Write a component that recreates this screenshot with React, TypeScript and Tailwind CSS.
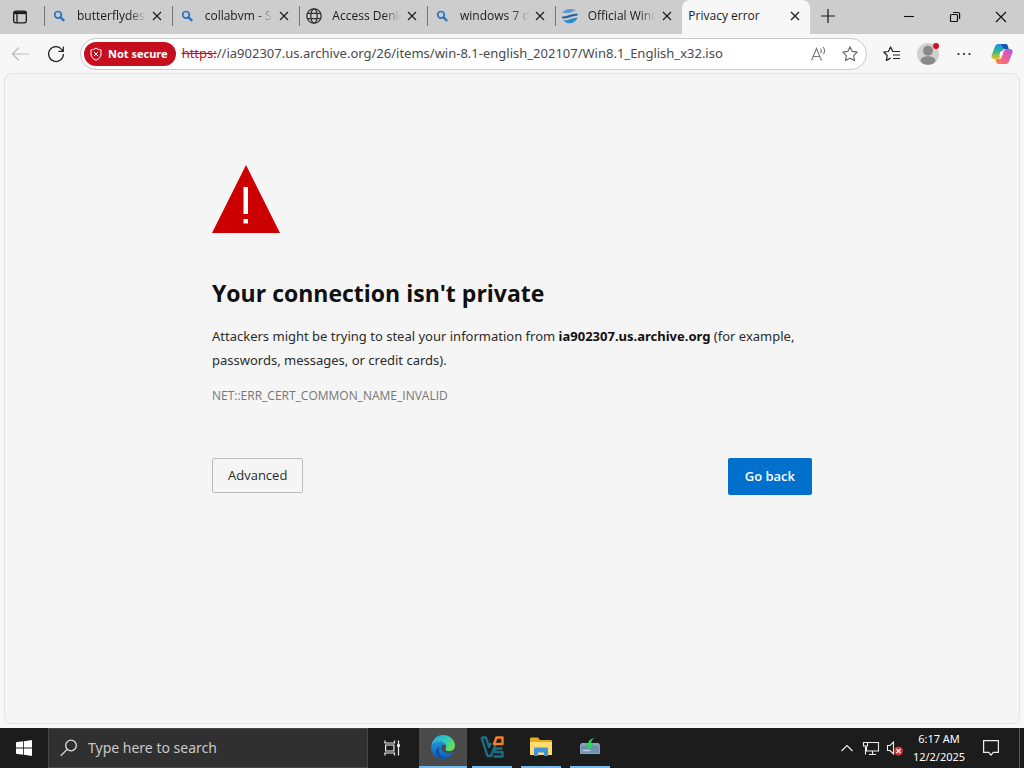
import React from "react";

const tabs = [
  { title: "butterflydesi", icon: "search" },
  { title: "collabvm - S", icon: "search" },
  { title: "Access Denie", icon: "globe" },
  { title: "windows 7 d", icon: "search" },
  { title: "Official Wind", icon: "swirl" },
];

function TabIcon({ type }: { type: string }) {
  if (type === "globe") {
    return (
      <svg viewBox="0 0 16 16" className="w-4 h-4" fill="none" stroke="#333" strokeWidth="1.3">
        <circle cx="8" cy="8" r="7.2" />
        <ellipse cx="8" cy="8" rx="3.2" ry="7.2" />
        <path d="M1.4 5.3h13.2M1.4 10.7h13.2" />
      </svg>
    );
  }
  if (type === "swirl") {
    return (
      <svg viewBox="0 0 16 16" className="w-4 h-4">
        <path d="M.5 4.800C2 1.500 8-.5 14 2.200C11.500 2.600 9.500 6 .5 4.800Z" fill="#5b9bd5" />
        <path d="M0 8.400c5 .8 8-2.700 15.500-2.600v2C10 7.600 7 11 .2 10.400Z" fill="#2a5f9e" />
        <path d="M1.500 12.200c5 .8 8-2.600 14-2.400C13.500 15.200 6 17.800 1.500 12.200Z" fill="#2f8bd0" />
      </svg>
    );
  }
  return (
    <svg viewBox="0 0 16 16" className="w-4 h-4" fill="none" stroke="#2d75bd" strokeLinecap="round">
      <circle cx="7" cy="6.8" r="3.3" strokeWidth="1.7" />
      <path d="M9.6 9.4l3 3" strokeWidth="2.2" />
    </svg>
  );
}

function CloseIcon() {
  return (
    <svg viewBox="0 0 10 10" className="w-[10px] h-[10px]" stroke="#222" strokeWidth="1.3">
      <path d="M1 1l8 8M9 1L1 9" />
    </svg>
  );
}

function TabBar() {
  return (
    <header className="flex h-[34px] shrink-0 bg-[#cdcdcd] font-['Open_Sans','Noto_Sans',sans-serif]">
      <button aria-label="Tab actions" className="flex w-11 shrink-0 items-center justify-center pr-1">
        <svg viewBox="0 0 16 16" className="w-4 h-4" fill="none" stroke="#1a1a1a" strokeWidth="1.3">
          <rect x="1.7" y="2.2" width="12.6" height="11.6" rx="2" />
          <path d="M2 3.800h12" strokeWidth="2.6" />
          <path d="M5 5v8.500" />
        </svg>
      </button>
      <div className="flex min-w-0 max-w-[766px] flex-1">
        {tabs.map((tab) => (
          <div key={tab.title} className="flex h-8 min-w-0 flex-1 items-center">
            <span className="h-5 w-px shrink-0 bg-[#777]" />
            <button className="flex min-w-0 flex-1 items-center pl-1.5">
              <span className="shrink-0">
                <TabIcon type={tab.icon} />
              </span>
              <span className="ml-2.5 flex-1 overflow-hidden whitespace-nowrap text-left text-xs text-[#1a1a1a] [mask-image:linear-gradient(to_right,black_75%,transparent)]">
                {tab.title}
              </span>
            </button>
            <button aria-label={`Close ${tab.title}`} className="ml-1.5 mr-2.5 shrink-0">
              <CloseIcon />
            </button>
          </div>
        ))}
        <div className="flex min-w-0 flex-1 items-center rounded-t-lg bg-[#f7f7f7] pb-0.5">
          <button className="flex-1 overflow-hidden whitespace-nowrap pl-1.5 text-left text-xs text-[#1a1a1a]">
            Privacy error
          </button>
          <button aria-label="Close Privacy error" className="mr-2.5 shrink-0">
            <CloseIcon />
          </button>
        </div>
      </div>
      <button aria-label="New tab" className="flex h-8 w-9 shrink-0 items-center justify-center">
        <svg viewBox="0 0 14 14" className="w-3.5 h-3.5" stroke="#1a1a1a" strokeWidth="1.2">
          <path d="M7 0v14M0 7h14" />
        </svg>
      </button>
      <div className="ml-auto flex">
        <button aria-label="Minimize" className="flex w-[46px] items-center justify-center">
          <svg viewBox="0 0 12 12" className="w-3 h-3" stroke="#111" strokeWidth="1.1">
            <path d="M1 5.500h10" />
          </svg>
        </button>
        <button aria-label="Restore" className="flex w-[46px] items-center justify-center">
          <svg viewBox="0 0 12 12" className="w-3 h-3" fill="none" stroke="#111" strokeWidth="1.2">
            <rect x="1.5" y="3.5" width="7" height="7" rx="1" />
            <path d="M4 1.500h5a1.600 1.600 0 0 1 1.600 1.600v5" />
          </svg>
        </button>
        <button aria-label="Close window" className="flex w-[46px] items-center justify-center">
          <svg viewBox="0 0 12 12" className="w-3 h-3" stroke="#111" strokeWidth="1.2">
            <path d="M1 1l10 10M11 1L1 11" />
          </svg>
        </button>
      </div>
    </header>
  );
}

function Toolbar() {
  return (
    <nav className="flex h-[39px] shrink-0 items-center bg-[#f7f7f7] pt-px">
      <button aria-label="Back" className="flex w-10 shrink-0 justify-center">
        <svg viewBox="0 0 18 16" className="h-4 w-[18px]" fill="none" stroke="#bbb" strokeWidth="1.2">
          <path d="M18 8H1.500M8 1.500L1.500 8L8 14.500" />
        </svg>
      </button>
      <button aria-label="Refresh" className="flex w-8 shrink-0 justify-center">
        <svg viewBox="0 0 18 18" className="h-[18px] w-[18px]" fill="none" stroke="#222" strokeWidth="1.2">
          <path d="M16.400 9A7.400 7.400 0 1 1 14.800 4.500L16.300 6.300M16.300 1.600v4.800h-4.800" />
        </svg>
      </button>
      <div className="ml-2 flex h-8 min-w-0 flex-1 items-center rounded-full border border-[#c8c8c8] bg-white pl-[3px] pr-2">
        <button className="flex h-6 shrink-0 items-center gap-1.5 rounded-full bg-[#c50f1f] pl-1.5 pr-2 text-[11px] font-bold text-white">
          <svg viewBox="0 0 12 14" className="h-3.5 w-3" fill="none" stroke="#fff" strokeWidth="1">
            <path d="M6 1C4.500 2.200 2.800 2.700 1 2.800V7c0 3 2 5 5 6.200C9 12 11 10 11 7V2.800C9.200 2.700 7.500 2.200 6 1Z" />
            <path d="M4 5l4 4M8 5L4 9" />
          </svg>
          Not secure
        </button>
        <span className="ml-1.5 shrink-0 text-[13px] text-[#c50f1f] line-through">https:</span>
        <input
          aria-label="Address"
          defaultValue="//ia902307.us.archive.org/26/items/win-8.1-english_202107/Win8.1_English_x32.iso"
          className="min-w-0 flex-1 bg-transparent text-[13px] text-[#4a4a4a] outline-none"
        />
        <button aria-label="Read aloud" className="mr-3.5 shrink-0">
          <svg viewBox="0 0 18 16" className="h-4 w-[18px]" fill="none" stroke="#777" strokeWidth="1.1">
            <path d="M1.500 14.500L6.500 2.500L11.500 14.500M3.300 10.500h6.400" />
            <path d="M10.500 2.500c1 1.300 1 3 .3 4.500M13 1c1.800 2 1.800 5 .5 7.200" />
          </svg>
        </button>
        <button aria-label="Add to favorites" className="shrink-0">
          <svg viewBox="0 0 16 16" className="h-4 w-4" fill="none" stroke="#666" strokeWidth="1.1" strokeLinejoin="round">
            <path d="M8 .8l2.200 4.600 5 .7-3.600 3.500.9 5L8 12.200 3.500 14.600l.9-5L.8 6.100l5-.7Z" />
          </svg>
        </button>
      </div>
      <button aria-label="Favorites" className="ml-4 shrink-0">
        <svg viewBox="0 0 18 16" className="h-4 w-[18px]" fill="none" stroke="#222" strokeWidth="1.2" strokeLinejoin="round">
          <path d="M11 5.500H9.800L7.600 1 5.400 5.500.8 6.200l3.400 3.300-.8 4.900 4.200-2.300" />
          <path d="M10.500 5.500H17M10 9h7M10 12.500h7" />
        </svg>
      </button>
      <button aria-label="Profile" className="relative ml-4 shrink-0">
        <svg viewBox="0 0 22 22" className="h-[22px] w-[22px]">
          <circle cx="11" cy="11" r="11" fill="#d2d0ce" />
          <circle cx="11" cy="7.800" r="5" fill="#8b8986" />
          <ellipse cx="11" cy="17.500" rx="7.500" ry="4.200" fill="#8b8986" />
        </svg>
        <span className="absolute top-0 right-0 h-1.5 w-1.5 rounded-full bg-[#d20f26]" />
      </button>
      <button aria-label="Settings and more" className="ml-[18px] shrink-0">
        <svg viewBox="0 0 14 4" className="h-1 w-3.5" fill="#222">
          <circle cx="1.500" cy="2" r="1.100" />
          <circle cx="7" cy="2" r="1.100" />
          <circle cx="12.500" cy="2" r="1.100" />
        </svg>
      </button>
      <button aria-label="Copilot" className="ml-5 mr-[11px] shrink-0">
        <svg viewBox="0 0 22 22" className="h-[22px] w-[22px]">
          <defs>
            <linearGradient id="cpLeft" x1="0" y1="0" x2="0" y2="1">
              <stop offset="0" stopColor="#1b8fe8" />
              <stop offset=".5" stopColor="#37b58c" />
              <stop offset="1" stopColor="#f0c419" />
            </linearGradient>
            <linearGradient id="cpRight" x1="1" y1="0" x2="0" y2="1">
              <stop offset="0" stopColor="#a95be8" />
              <stop offset=".5" stopColor="#ee5c9c" />
              <stop offset="1" stopColor="#fb8a3c" />
            </linearGradient>
          </defs>
          <path d="M7 1h7.500c1.500 0 2 1 2.500 2.500L17.500 6H14c-1.500 0-2.300.8-2.800 2.300L9.500 13.500C9 15 8 16 6.500 16H3C1 16 0 14.500.5 12.500L4 3.500C4.700 2 5.500 1 7 1Z" fill="url(#cpLeft)" />
          <path d="M10 1h4.500c1.500 0 2 1 2.500 2.500L17.500 6H14l-2-1Z" fill="#1556b8" />
          <path d="M15 21H7.500C6 21 5.500 20 5 18.500L4.500 16H8c1.500 0 2.300-.8 2.800-2.300L12.500 8.500C13 7 14 6 15.500 6H19c2 0 3 1.500 2.500 3.500L18 18.500C17.300 20 16.500 21 15 21Z" fill="url(#cpRight)" />
          <path d="M9.300 8.500h3L11 13.500H8.300Z" fill="#f7f7f7" />
        </svg>
      </button>
    </nav>
  );
}

function PrivacyError() {
  return (
    <div className="flex min-h-0 flex-1 bg-[#f7f7f7] px-1 pb-1">
      <main className="flex-1 rounded-lg border border-[#e3e3e3] bg-[#f5f5f5] px-4">
        <div className="mx-auto max-w-[600px] pt-[91px]">
          <svg viewBox="0 0 68 68" className="h-[68px] w-[68px]">
            <path d="M34 0L68 68H0Z" fill="#c00" />
            <path d="M31.500 22h4.500v27h-4.500ZM31.500 54h4.500v4.500h-4.500Z" fill="#fff" />
          </svg>
          <h1 className="mt-11 font-['Open_Sans','Noto_Sans',sans-serif] text-[23px] font-bold leading-8 text-[#101010]">
            Your connection isn't private
          </h1>
          <p className="mt-[15px] text-[13px] leading-6 text-[#2b2b2b]">
            Attackers might be trying to steal your information from{" "}
            <strong className="text-[#101010]">ia902307.us.archive.org</strong> (for example,
            passwords, messages, or credit cards).
          </p>
          <p className="mt-3 font-['Open_Sans','Noto_Sans',sans-serif] text-xs leading-6 text-[#767676]">
            NET::ERR_CERT_COMMON_NAME_INVALID
          </p>
          <div className="mt-[50px] flex items-start justify-between font-['Open_Sans','Noto_Sans',sans-serif] text-[13px]">
            <button className="h-[35px] rounded-[2px] border border-[#bcbcbc] px-[15px] text-[#2b2b2b]">
              Advanced
            </button>
            <button className="h-[37px] rounded-[2px] bg-[#0070cc] px-[17px] font-semibold text-white">
              Go back
            </button>
          </div>
        </div>
      </main>
    </div>
  );
}

function Taskbar() {
  return (
    <footer className="flex h-10 shrink-0 bg-[#1c1c1c] text-white">
      <button aria-label="Start" className="flex w-12 items-center justify-center">
        <svg viewBox="0 0 16 16" className="h-4 w-4" fill="#fff">
          <path d="M0 2.300L7.200 1.300V7.600H0ZM8 1.200L16 0V7.600H8ZM0 8.400H7.200V14.700L0 13.700ZM8 8.400H16V16L8 14.800Z" />
        </svg>
      </button>
      <label className="flex w-80 items-center border border-[#484848] bg-[#303030] pl-[11px]">
        <svg viewBox="0 0 18 18" className="h-[18px] w-[18px]" fill="none" stroke="#ddd" strokeWidth="1.300">
          <circle cx="11" cy="6.500" r="5.300" />
          <path d="M7.200 10.400L.8 16.800" />
        </svg>
        <input
          aria-label="Search"
          placeholder="Type here to search"
          className="ml-2.5 min-w-0 flex-1 bg-transparent text-sm outline-none placeholder:text-[#c8c8c8]"
        />
      </label>
      <button aria-label="Task view" className="flex w-12 items-center justify-center">
        <svg viewBox="0 0 16 16" className="h-4 w-4" fill="none" stroke="#eee" strokeWidth="1.200">
          <path d="M1 .5v2.500h9.500V.5M1 15.500V13h9.500v2.500M1.600 5h8.300v6H1.600ZM14.500.5v15" />
          <path d="M13 5.500h3" strokeWidth="2.500" />
        </svg>
      </button>
      <button aria-label="Microsoft Edge" className="ml-[3px] flex w-12 items-center justify-center border-b-2 border-[#76b9ed] bg-[#4a4a4a]">
        <svg viewBox="0 0 24 24" className="h-6 w-6">
          <defs>
            <linearGradient id="edgeTop" x1="0" y1="0" x2="1" y2=".6">
              <stop offset="0" stopColor="#2ba8e0" />
              <stop offset=".5" stopColor="#2cc4c8" />
              <stop offset="1" stopColor="#66de57" />
            </linearGradient>
            <linearGradient id="edgeLow" x1="0" y1="0" x2="0" y2="1">
              <stop offset="0" stopColor="#1d94da" />
              <stop offset="1" stopColor="#0c5cb4" />
            </linearGradient>
          </defs>
          <path d="M.5 11C1 4.500 6 0 12 0c6.500 0 12 5 12 10.500 0 3.500-2.500 5.700-5.800 5.700-2.700 0-4.300-1-3.700-2.200C16.500 11 14 7.500 9.500 7.500 5 7.500 1.500 9 .5 11Z" fill="url(#edgeTop)" />
          <path d="M0 12.500C.3 9 4 6.500 8.500 6.500c4.500 0 7 2.800 6.800 5-.4-1.500-2-2-3.300-1.500-3.500 1.500-2 8 5.500 8 2 0 3.700-.5 4.700-1C20.500 21 16.500 24 12 24 5 24 0 18.500 0 12.500Z" fill="url(#edgeLow)" />
          <path d="M8.500 12c-2.500 5 1.500 11 7 11.300C10 25 4.500 21 5 16c.1-2 1.500-3.500 3.500-4Z" fill="#124f9c" />
        </svg>
      </button>
      <button aria-label="VirtualBox" className="ml-[5px] flex w-10 items-center justify-center border-b-2 border-[#76b9ed]">
        <svg viewBox="0 0 24 24" className="h-6 w-6" fill="none" strokeWidth="2.400" strokeLinejoin="round">
          <path d="M1.500 2.500h4.500L9 12l2-4M1.500 2.500L7.500 21H11l5-12.500" stroke="#1b6f84" />
          <path d="M22.500 13.500H15v3.500h7.500V21.500H13.500" stroke="#1b6f84" />
          <path d="M14 9l2.500-6.500h6V9Z" stroke="#f38022" />
        </svg>
      </button>
      <button aria-label="File Explorer" className="ml-[9px] flex w-10 items-center justify-center border-b-2 border-[#76b9ed]">
        <svg viewBox="0 0 22 20" className="h-5 w-[22px]">
          <path d="M0 2C0 1 .5.500 1.500.500H8L10 3h10.500c1 0 1.500.500 1.500 1.500V18H0Z" fill="#e8a922" />
          <path d="M0 5h22v13H0Z" fill="#ffdc70" />
          <path d="M4 19v-7c0-1 .5-1.500 1.500-1.500h11c1 0 1.500.500 1.500 1.500v7h-4v-3.500H8V19Z" fill="#4292dc" />
        </svg>
      </button>
      <button aria-label="Drive tool" className="ml-[9px] flex w-10 items-center justify-center border-b-2 border-[#76b9ed]">
        <svg viewBox="0 0 20 18" className="h-[18px] w-5">
          <path d="M1.500 5h17L20 7v9H0V7Z" fill="#8da4b8" />
          <path d="M1 7.500h18V15H1Z" fill="#6d93b0" />
          <path d="M2.500 12.500h8" stroke="#b7d2e1" strokeWidth="1.500" />
          <path d="M14.500 0C11 .5 8.500 2.500 8 5.500H5L9.500 11 13.500 5.500H11C11.300 3 12.500 1.200 14.500 0Z" fill="#2bd957" />
        </svg>
      </button>

      <div className="ml-auto flex items-center">
        <button aria-label="Show hidden icons">
          <svg viewBox="0 0 12 8" className="h-2 w-3" fill="none" stroke="#eee" strokeWidth="1.200">
            <path d="M.5 7L6 1.500 11.500 7" />
          </svg>
        </button>
        <button aria-label="Network" className="ml-[9px]">
          <svg viewBox="0 0 18 16" className="h-4 w-[18px]" fill="none" stroke="#eee" strokeWidth="1.100">
            <path d="M6 2.500h10.500v8.500H4.500V7M10.500 11v3.500M7 14.500h7" />
            <path d="M1.500 2.500h4V6h-4ZM3.500 6v8.500" />
          </svg>
        </button>
        <button aria-label="Volume muted" className="ml-1.5">
          <svg viewBox="0 0 18 16" className="h-4 w-[18px]" fill="none">
            <path d="M1.500 5.500H4L7.500 2v12L4 10.500H1.500Z" stroke="#eee" strokeWidth="1.100" />
            <circle cx="12.500" cy="11" r="4.500" fill="#d13438" />
            <path d="M10.500 9l4 4M14.500 9l-4 4" stroke="#fff" strokeWidth="1.200" />
          </svg>
        </button>
        <button className="ml-2 w-[54px] text-center text-[11px] leading-[18px]">
          <span className="block whitespace-nowrap">6:17 AM</span>
          <span className="block whitespace-nowrap">12/2/2025</span>
        </button>
        <button aria-label="Notifications" className="ml-[17px] mr-5">
          <svg viewBox="0 0 16 16" className="h-4 w-4" fill="none" stroke="#eee" strokeWidth="1.200">
            <path d="M.6.600h14.800v11.800h-5L8 15 5.600 12.400H.6Z" />
          </svg>
        </button>
        <button aria-label="Show desktop" className="h-10 w-[5px] border-l border-[#555]" />
      </div>
    </footer>
  );
}

export default function App() {
  return (
    <div className="flex h-screen flex-col overflow-hidden font-['Noto_Sans','Open_Sans',sans-serif]">
      <TabBar />
      <Toolbar />
      <PrivacyError />
      <Taskbar />
    </div>
  );
}
